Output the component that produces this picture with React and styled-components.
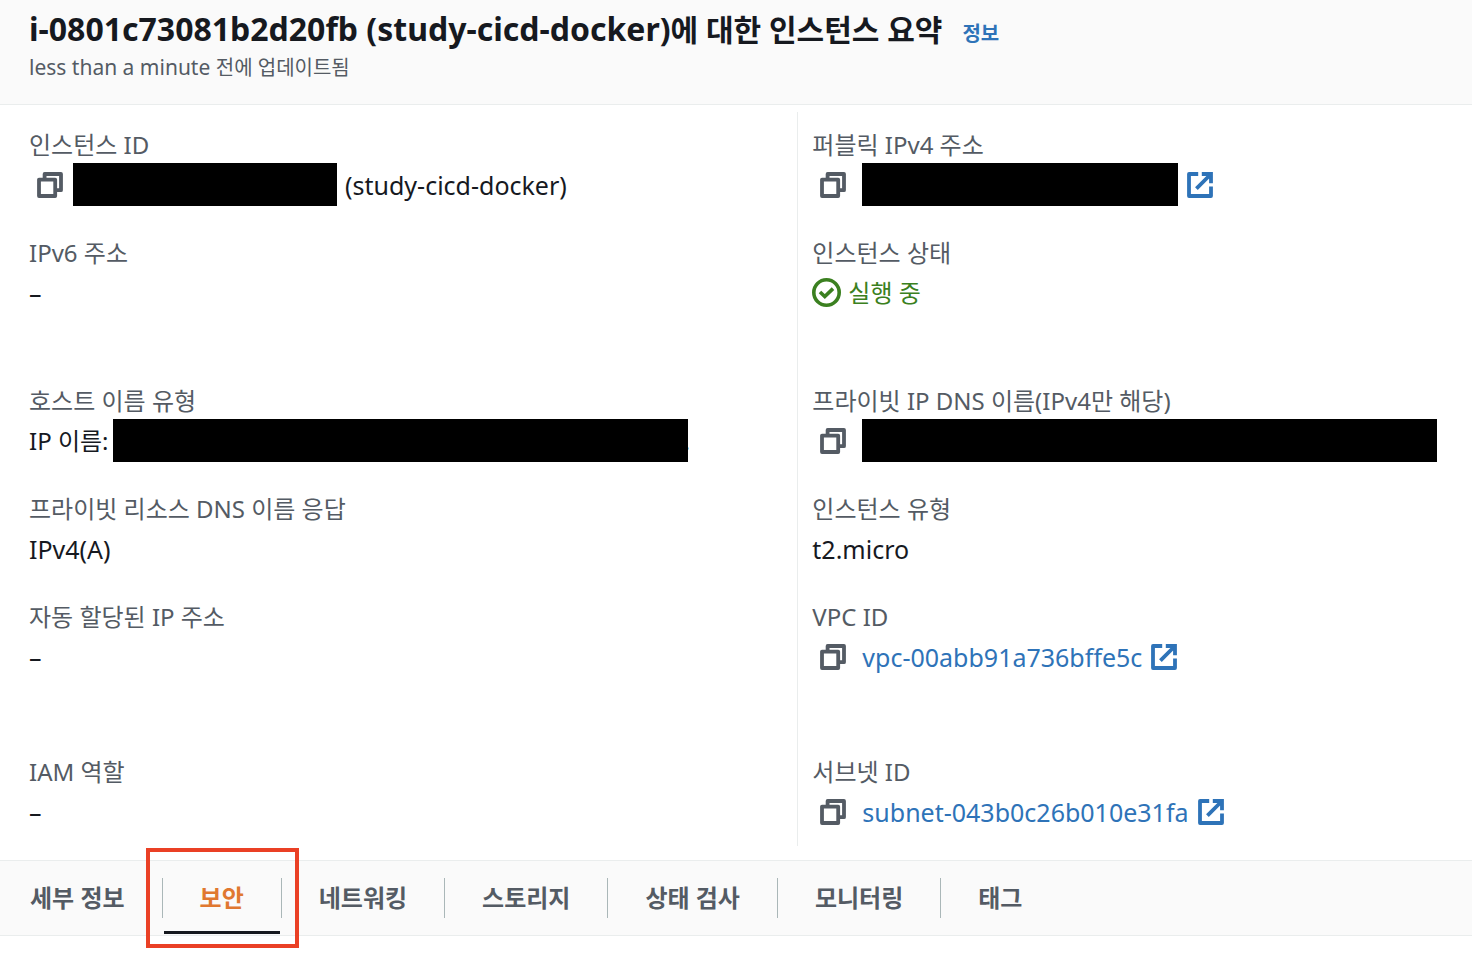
import React from 'react'
import styled, { createGlobalStyle } from 'styled-components'

const details = [
  [
    { label: '인스턴스 ID', copy: true, redacted: 264, suffix: '(study-cicd-docker)' },
    { label: 'IPv6 주소', text: '–', extra: 40 },
    { label: '호스트 이름 유형', prefix: 'IP 이름:', redacted: 575, tail: '.' },
    { label: '프라이빗 리소스 DNS 이름 응답', text: 'IPv4(A)' },
    { label: '자동 할당된 IP 주소', text: '–', extra: 47 },
    { label: 'IAM 역할', text: '–' },
  ],
  [
    { label: '퍼블릭 IPv4 주소', copy: true, redacted: 316, external: true },
    { label: '인스턴스 상태', status: '실행 중', extra: 40 },
    { label: '프라이빗 IP DNS 이름(IPv4만 해당)', copy: true, redacted: 575 },
    { label: '인스턴스 유형', text: 't2.micro' },
    { label: 'VPC ID', copy: true, link: 'vpc-00abb91a736bffe5c', extra: 47 },
    { label: '서브넷 ID', copy: true, link: 'subnet-043b0c26b010e31fa' },
  ],
]

const tabs = ['세부 정보', '보안', '네트워킹', '스토리지', '상태 검사', '모니터링', '태그']

const CopyIcon = () => (
  <svg width='26' height='26' viewBox='0 0 26 26' fill='none' stroke='currentColor' strokeWidth='3.8' strokeLinejoin='round'>
    <path d='M2 7.6h16.2V24H2z' />
    <path d='M7.6 6V2H24v16.2h-5' />
  </svg>
)

const ExternalIcon = () => (
  <svg width='26' height='26' viewBox='0 0 26 26' fill='none' stroke='currentColor' strokeWidth='3.8' strokeLinejoin='round'>
    <path d='M11.2 2H2v22h22v-9.4' />
    <path d='M14.8 2H24v9.2M24 2L9.4 16.6' strokeLinejoin='miter' />
  </svg>
)

const StatusIcon = () => (
  <svg width='29' height='29' viewBox='0 0 29 29' fill='none' stroke='currentColor' strokeWidth='3.6'>
    <circle cx='14.5' cy='14.5' r='12.7' />
    <path d='M8 14l4.8 4.6 8.2-8' />
  </svg>
)

const DetailValue = ({ item, index }) => (
  <Value>
    {item.copy && (
      <CopyButton type='button' aria-label={`${item.label} 복사`} $wide={index === 1}>
        <CopyIcon />
      </CopyButton>
    )}
    {item.prefix && <Prefix>{item.prefix}</Prefix>}
    {item.text && <Latin>{item.text}</Latin>}
    {item.redacted && <Redacted $width={item.redacted} />}
    {item.tail && <Tail>{item.tail}</Tail>}
    {item.suffix && <Suffix>{item.suffix}</Suffix>}
    {item.status && (
      <Status>
        <StatusIcon />
        {item.status}
      </Status>
    )}
    {(item.link || item.external) && (
      <ValueLink href='#' aria-label={item.link || item.label}>
        {item.link}
        <ExternalIcon />
      </ValueLink>
    )}
  </Value>
)

const App = () => {
  return (
    <Page>
      <GlobalStyle />
      <Header>
        <TitleRow>
          <h1>
            i-0801c73081b2d20fb (study-cicd-docker)<span>에 대한 인스턴스 요약</span>
          </h1>
          <a href='#'>정보</a>
        </TitleRow>
        <p>
          less than a minute <span>전에 업데이트됨</span>
        </p>
      </Header>
      <Details>
        {details.map((column, index) => {
          return (
            <Column key={index}>
              {column.map((item) => (
                <Item key={item.label} $extra={item.extra}>
                  <Label>{item.label}</Label>
                  <DetailValue item={item} index={index} />
                </Item>
              ))}
            </Column>
          )
        })}
      </Details>
      <TabBar role='tablist'>
        {tabs.map((tab) => {
          const active = tab === '보안'
          return (
            <TabItem key={tab}>
              <Tab type='button' role='tab' aria-selected={active} $active={active}>
                <span>{tab}</span>
              </Tab>
              {active && <Highlight />}
            </TabItem>
          )
        })}
      </TabBar>
    </Page>
  )
}

const GlobalStyle = createGlobalStyle`
  * {
    box-sizing: border-box;
  }
  body {
    margin: 0;
    background: #fff;
    color: #16191f;
    font-family: 'Noto Sans', 'Noto Sans CJK KR', sans-serif;
    font-size: 24px;
  }
  h1, p, dl, dd {
    margin: 0;
  }
  a {
    color: #2e73b8;
    text-decoration: none;
  }
  button {
    padding: 0;
    border: 0;
    background: none;
    font: inherit;
    cursor: pointer;
  }
  svg {
    display: block;
    flex: none;
  }
`
const Page = styled.div`
  min-height: 100vh;
`
const Header = styled.header`
  padding: 7px 29px 20px;
  background: #fafafa;
  border-bottom: 1px solid #eaeded;
  p {
    color: #545b64;
    font-size: 21px;
    line-height: 32px;
  }
  p span {
    font-size: 20px;
  }
`
const TitleRow = styled.div`
  display: flex;
  align-items: baseline;
  gap: 20px;
  height: 44px;
  white-space: nowrap;
  h1 {
    font-size: 32px;
    font-weight: 700;
    line-height: 44px;
  }
  h1 span {
    font-size: 30px;
  }
  a {
    font-size: 20px;
    font-weight: 700;
    line-height: 32px;
  }
`
const Details = styled.main`
  display: grid;
  grid-template-columns: 13fr 11fr;
  padding: 7px 0 14px;
`
const Column = styled.dl`
  padding: 15px 0 13px 29px;
  min-width: 0;
  & + & {
    padding-left: 14px;
    border-left: 1px solid #eaeded;
  }
`
const Item = styled.div`
  margin-bottom: ${({ $extra = 0 }) => 29 + $extra}px;
  white-space: nowrap;
  &:last-child {
    margin-bottom: 0;
  }
`
const Label = styled.dt`
  color: #545b64;
  line-height: 36px;
`
const Value = styled.dd`
  display: flex;
  align-items: center;
  height: 43px;
  line-height: 36px;
`
const CopyButton = styled.button`
  margin-left: 8px;
  margin-right: ${({ $wide }) => ($wide ? 16 : 10)}px;
  color: #545b64;
`
const Latin = styled.span`
  font-size: 25px;
`
const Prefix = styled.span`
  margin-right: 4px;
`
const Redacted = styled.span`
  position: relative;
  z-index: 1;
  flex: none;
  width: ${({ $width }) => $width}px;
  height: 43px;
  background: #000;
`
const Tail = styled.span`
  margin-left: -4px;
`
const Suffix = styled(Latin)`
  margin-left: 8px;
`
const Status = styled.span`
  display: flex;
  align-items: center;
  gap: 7px;
  color: #3b8020;
`
const ValueLink = styled.a`
  display: flex;
  align-items: center;
  font-size: 25px;
  svg {
    margin-left: 9px;
  }
`
const TabBar = styled.div`
  display: flex;
  background: #fafafa;
  border-top: 1px solid #eaeded;
  border-bottom: 1px solid #eaeded;
`
const TabItem = styled.div`
  position: relative;
`
const Tab = styled.button`
  padding: 17px 0;
  color: ${({ $active }) => ($active ? '#e07830' : '#545b64')};
  font-weight: 700;
  white-space: nowrap;
  span {
    display: block;
    padding: 0 37px;
    border-right: 1px solid #aab7b8;
    line-height: 40px;
  }
  ${TabItem}:first-child & span {
    padding-left: 30px;
  }
  ${TabItem}:last-child & span {
    border-right: 0;
  }
  &::after {
    content: '';
    display: ${({ $active }) => ($active ? 'block' : 'none')};
    position: absolute;
    left: 1px;
    right: 2px;
    bottom: 1px;
    height: 3px;
    background: #16191f;
  }
`
const Highlight = styled.div`
  position: absolute;
  inset: -13px -17px;
  border: 4px solid #ea4025;
  pointer-events: none;
`
export default App
